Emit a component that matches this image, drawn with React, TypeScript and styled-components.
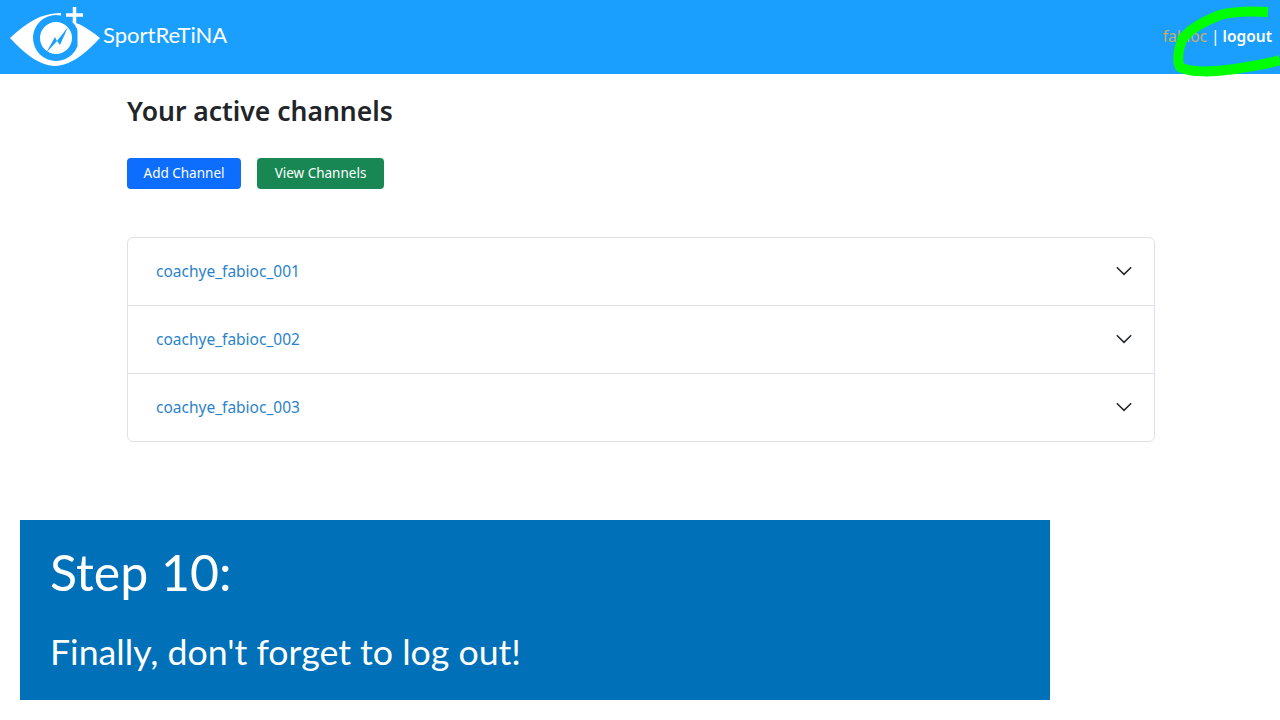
import React from "react";
import styled, { createGlobalStyle } from "styled-components";

const Global = createGlobalStyle`
  html, body { margin: 0; padding: 0; background: #fff; }
  body { font-family: "Noto Sans", "Open Sans", sans-serif; height: 720px; overflow: hidden; }
`;
const Page = styled.div`
  position: relative;
  width: 1280px;
  height: 720px;
  overflow: hidden;
`;
const Header = styled.header`
  height: 74px;
  background: #1a9fff;
  display: flex;
  align-items: center;
  justify-content: space-between;
  padding: 0 8px 0 9px;
`;
const Brand = styled.div`
  display: flex;
  align-items: center;
  gap: 0;
`;
const BrandName = styled.span`
  font-family: Lato, sans-serif;
  font-size: 22px;
  color: #fff;
  margin-top: -6px;
`;
const UserBox = styled.div`
  font-size: 15.5px;
  color: #fff;
  display: flex;
  gap: 3px;
  margin-top: -3px;
`;
const UserName = styled.span`
  color: #c4b060;
  margin-right: 1px;
`;
const Logout = styled.span`
  font-weight: 600;
`;
const Main = styled.main`
  width: 1028px;
  margin: 0 0 0 127px;
`;
const Title = styled.h1`
  margin: 19px 0 0;
  font-size: 26.5px;
  line-height: 36px;
  font-weight: 600;
  color: #212529;
`;
const Actions = styled.div`
  display: flex;
  gap: 16px;
  margin-top: 29px;
`;
const Button = styled.button<{ $bg: string; $w: number }>`
  width: ${(p) => p.$w}px;
  height: 31px;
  border: 0;
  border-radius: 4px;
  background: ${(p) => p.$bg};
  color: #fff;
  font-family: inherit;
  font-size: 13.5px;
  line-height: 30px;
  padding: 0 0 1px;
`;
const Accordion = styled.div`
  margin-top: 48px;
  border: 1px solid #dee2e6;
  border-radius: 6px;
`;
const Row = styled.div`
  height: 67px;
  display: flex;
  align-items: center;
  justify-content: space-between;
  padding: 0 21px 0 28px;
  font-size: 15.5px;
  color: #2a83c9;
  & + & {
    border-top: 1px solid #dee2e6;
  }
`;
const RowLabel = styled.span`
  margin-top: -1px;
`;
const Arrow = styled.svg`
  margin-top: -2px;
`;
const Banner = styled.section`
  position: absolute;
  left: 20px;
  top: 520px;
  width: 1030px;
  height: 180px;
  box-sizing: border-box;
  padding: 23px 30px 0;
  background: #0070b8;
  color: #fff;
  font-family: Lato, sans-serif;
`;
const StepTitle = styled.div`
  font-size: 50px;
  line-height: 58px;
`;
const StepText = styled.div`
  font-size: 35.7px;
  line-height: 44px;
  margin-top: 29px;
`;
const Scribble = styled.svg`
  position: absolute;
  left: 1160px;
  top: 0;
`;

const Logo = () => (
  <svg width="94" height="70" viewBox="0 0 94 70">
    <path
      d="M1 36 C13 25 24 17 34 14 C40 12 46 11 52 11 L52 14 L70 22 C78 26 85 31 91 36 C78 50 62 64 46 64 C30 64 14 50 1 36 Z"
      fill="#fff"
    />
    <circle cx="47" cy="36" r="23" fill="#1a9fff" />
    <path d="M69.500 24 V43" stroke="#fff" strokeWidth="2" fill="none" />
    <path d="M52 9 L70 9 L70 22 L59 18 Z" fill="#1a9fff" />
    <circle cx="47" cy="36" r="16" fill="#fff" />
    <path d="M37 51 L46 35 L48 39 L59 25 L51 43 L48 39 Z" fill="#1a9fff" />
    <path d="M57 13 H74 M65.500 5 V21" stroke="#fff" strokeWidth="3.500" fill="none" />
  </svg>
);

const Chevron = () => (
  <Arrow width="18" height="18" viewBox="0 0 16 16">
    <path d="M1.600 4.600 L8 11 L14.400 4.600" fill="none" stroke="#212529" strokeWidth="1.300" />
  </Arrow>
);

export default function App() {
  return (
    <Page>
      <Global />
      <Header>
        <Brand>
          <Logo />
          <BrandName>SportReTiNA</BrandName>
        </Brand>
        <UserBox>
          <UserName>fabioc</UserName>
          <span>|</span>
          <Logout>logout</Logout>
        </UserBox>
      </Header>
      <Main>
        <Title>Your active channels</Title>
        <Actions>
          <Button $bg="#0d6efd" $w={114}>Add Channel</Button>
          <Button $bg="#198754" $w={127}>View Channels</Button>
        </Actions>
        <Accordion>
          {["coachye_fabioc_001", "coachye_fabioc_002", "coachye_fabioc_003"].map((n) => (
            <Row key={n}>
              <RowLabel>{n}</RowLabel>
              <Chevron />
            </Row>
          ))}
        </Accordion>
      </Main>
      <Banner>
        <StepTitle>Step 10:</StepTitle>
        <StepText>Finally, don't forget to log out!</StepText>
      </Banner>
      <Scribble width="120" height="80" viewBox="0 0 120 80">
        <path
          d="M108 12 C90 11 75 11 60 15 C45 21 28 30 22 40 C18 50 17 62 20 67 C30 73 55 72 75 69 C90 66 105 65 120 60"
          fill="none"
          stroke="#00ff00"
          strokeWidth="10"
          strokeLinejoin="round"
        />
      </Scribble>
    </Page>
  );
}
